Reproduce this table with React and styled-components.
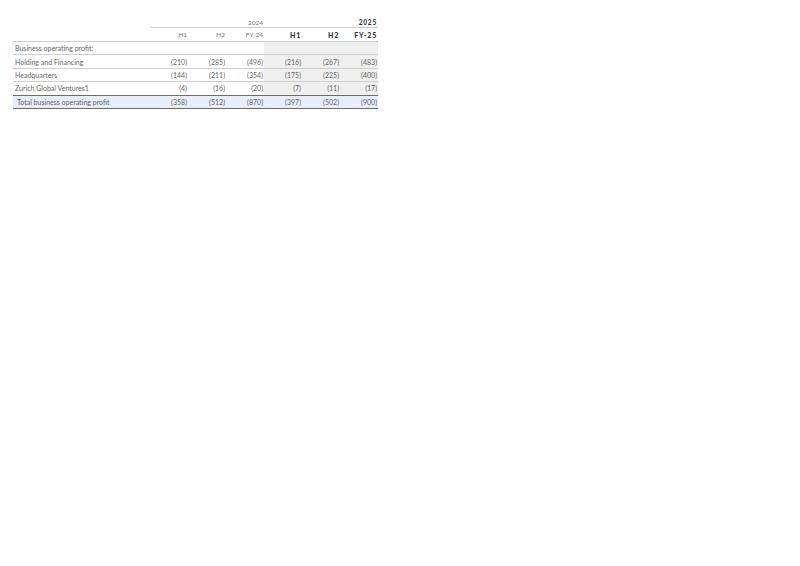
import React from 'react'
import styled, { createGlobalStyle } from 'styled-components'

const GlobalStyle = createGlobalStyle`
  html, body {
    margin: 0;
    padding: 0;
    background: #fff;
  }
  body {
    font-family: Lato, "Liberation Sans", sans-serif;
  }
`

const Page = styled.div`
  width: 800px;
  height: 566px;
  padding: 16px 0 0 13px;
  box-sizing: border-box;
`

const Table = styled.table`
  border-collapse: collapse;
  table-layout: fixed;
  width: 365px;
  font-size: 7px;
  color: #666;
`

const LabelCol = styled.col`
  width: 137px;
`

const NumCol = styled.col`
  width: 38px;
`

const Cell = styled.td`
  height: ${p => p.h || 12.4}px;
  padding: 0 1px 0 ${p => (p.indent ? 4 : 2)}px;
  text-align: ${p => (p.label ? 'left' : 'right')};
  white-space: nowrap;
  vertical-align: middle;
  background: ${p => (p.shade ? '#efefef' : 'transparent')};
  border-bottom: ${p => p.line || 'none'};
`

const YearCell = styled(Cell)`
  font-size: 6.5px;
  color: ${p => (p.bold ? '#333' : '#777')};
  font-weight: ${p => (p.bold ? 900 : 400)};
  letter-spacing: ${p => (p.bold ? '0.8px' : '0')};
  vertical-align: bottom;
  padding-bottom: 1px;
`

const HeadCell = styled(Cell)`
  font-size: ${p => (p.bold ? 7 : 6.5)}px;
  color: ${p => (p.bold ? '#333' : '#777')};
  font-weight: ${p => (p.bold ? 900 : 400)};
  letter-spacing: ${p => (p.bold ? '0.8px' : '0')};
`

const TotalRow = styled.tr`
  background: #e6eefa;
`

const thin = '1px solid #cfcfcf'
const dark = '1.5px solid #6b6b6b'

const rows = [
  { label: 'Holding and Financing', v: ['(210)', '(285)', '(496)', '(216)', '(267)', '(483)'], line: thin },
  { label: 'Headquarters', v: ['(144)', '(211)', '(354)', '(175)', '(225)', '(400)'], line: thin },
  { label: 'Zurich Global Ventures1', v: ['(4)', '(16)', '(20)', '(7)', '(11)', '(17)'], line: dark }
]

export default function App () {
  return (
    <Page>
      <GlobalStyle />
      <Table>
        <colgroup>
          <LabelCol />
          <NumCol /><NumCol /><NumCol /><NumCol /><NumCol /><NumCol />
        </colgroup>
        <tbody>
          <tr>
            <YearCell label h={10} />
            <YearCell h={10} line={thin} />
            <YearCell h={10} line={thin} />
            <YearCell h={10} line={thin}>2024</YearCell>
            <YearCell h={10} line={thin} />
            <YearCell h={10} line={thin} />
            <YearCell h={10} line={thin} bold>2025</YearCell>
          </tr>
          <tr>
            <HeadCell label h={13} line={thin} />
            <HeadCell h={13} line={thin}>H1</HeadCell>
            <HeadCell h={13} line={thin}>H2</HeadCell>
            <HeadCell h={13} line={thin}>FY-24</HeadCell>
            <HeadCell h={13} line={thin} bold>H1</HeadCell>
            <HeadCell h={13} line={thin} bold>H2</HeadCell>
            <HeadCell h={13} line={thin} bold>FY-25</HeadCell>
          </tr>
          <tr>
            <Cell label line={thin}>Business operating profit:</Cell>
            <Cell line={thin} />
            <Cell line={thin} />
            <Cell line={thin} />
            <Cell line={thin} shade />
            <Cell line={thin} shade />
            <Cell line={thin} shade />
          </tr>
          {rows.map(r => (
            <tr key={r.label}>
              <Cell label line={r.line}>{r.label}</Cell>
              {r.v.map((v, i) => (
                <Cell key={i} line={r.line} shade={i > 2}>{v}</Cell>
              ))}
            </tr>
          ))}
          <TotalRow>
            <Cell label indent line={dark}>Total business operating profit</Cell>
            {['(358)', '(512)', '(870)', '(397)', '(502)', '(900)'].map((v, i) => (
              <Cell key={i} line={dark}>{v}</Cell>
            ))}
          </TotalRow>
        </tbody>
      </Table>
    </Page>
  )
}
